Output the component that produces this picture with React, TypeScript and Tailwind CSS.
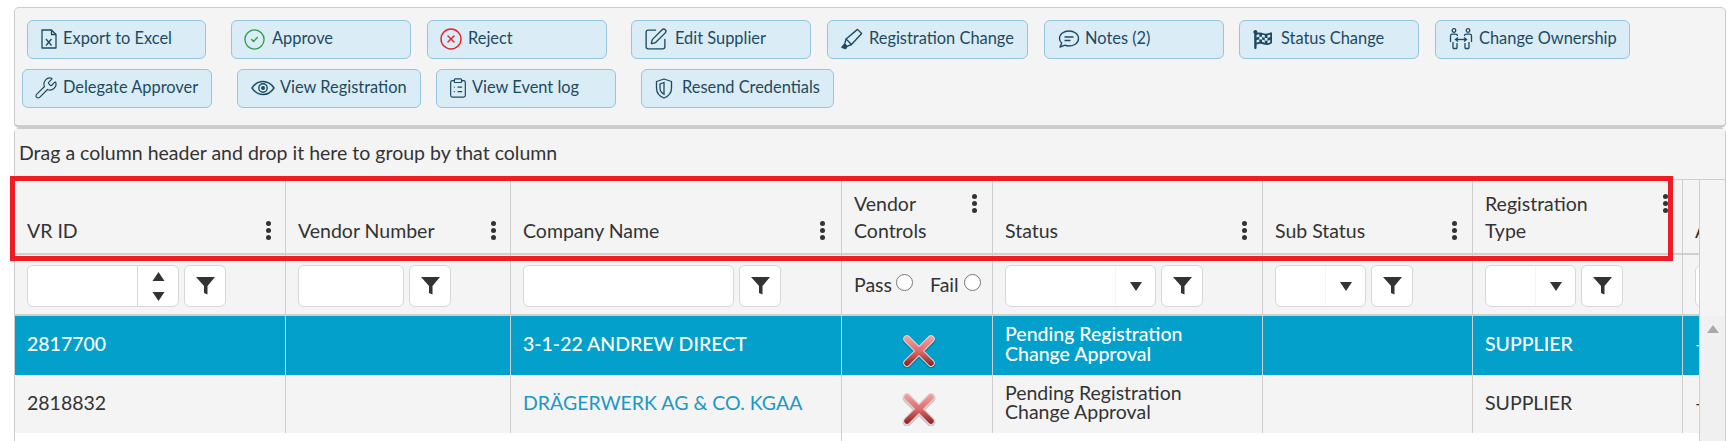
import type { ReactNode } from "react";
import { CircleCheck, CircleX, ClipboardList, SquarePen, Wrench } from "lucide-react";
import { FaFlagCheckered } from "react-icons/fa";

const INK = "#1d4a63";

function FileXIcon() {
  return (
    <svg width="16" height="20" viewBox="0 0 16 20" fill="none" stroke={INK} strokeWidth="1.3">
      <path d="M1 1h9.5L15 5.5V19H1z" strokeLinejoin="round" />
      <path d="M10.5 1v4.5H15" />
      <path d="M5 10l5.5 6.5M10.5 10L5 16.5" />
    </svg>
  );
}

function MarkerIcon() {
  return (
    <svg width="22" height="22" viewBox="0 0 24 24" fill="none" stroke={INK} strokeWidth="1.5" strokeLinejoin="round">
      <path d="M18 1.500l4.500 4.500L11.500 18l-6-6z" />
      <path d="M5.500 12L4 17.500l2.500 2.500 5-2" />
      <path d="M4 17.500L1 21l4 1.500 1.500-2.500" fill={INK} />
    </svg>
  );
}

function NotesIcon() {
  return (
    <svg width="22" height="20" viewBox="0 0 22 20" fill="none" stroke={INK} strokeWidth="1.4">
      <path d="M11 2c5 0 9.500 2.900 9.500 7.500S16 17 11 17c-1.500 0-3-.3-4-.8L2 18l1.700-4C2.300 12.900 1.500 11.300 1.500 9.500 1.500 4.900 6 2 11 2z" strokeLinejoin="round" />
      <path d="M6.500 8h9M6.500 11.500h6" />
    </svg>
  );
}

function OwnershipIcon() {
  return (
    <svg width="24" height="22" viewBox="0 0 24 22" fill="none" stroke={INK} strokeWidth="1.3">
      <circle cx="5" cy="2.500" r="1.800" />
      <circle cx="19" cy="2.500" r="1.800" />
      <path d="M1.500 14V8c0-1 .8-1.800 1.800-1.800h3.400c1 0 1.800.8 1.800 1.800M4 20.500V14M8 20.500H4M8 20.500V15" />
      <path d="M22.500 14V8c0-1-.8-1.800-1.800-1.800h-3.400c-1 0-1.800.8-1.800 1.800M20 20.500V14M16 20.500h4M16 20.500V15" />
      <path d="M7 11.500h10" />
      <path d="M9 9.500l-2.500 2 2.500 2M15 9.500l2.500 2-2.500 2" />
    </svg>
  );
}

function EyeIcon() {
  return (
    <svg width="24" height="16" viewBox="0 0 24 16" fill="none" stroke={INK} strokeWidth="1.4">
      <path d="M1 8c2.800-4.300 6.500-6.500 11-6.500S20.200 3.700 23 8c-2.800 4.300-6.500 6.500-11 6.500S3.800 12.300 1 8z" />
      <circle cx="12" cy="8" r="4.200" />
      <circle cx="12" cy="8" r="2" fill={INK} stroke="none" />
    </svg>
  );
}

function ShieldIcon() {
  return (
    <svg width="18" height="21" viewBox="0 0 18 21" fill="none" stroke={INK} strokeWidth="1.3">
      <path d="M9 1l7.500 2.500V10c0 5-3.500 8.500-7.500 10C5 18.500 1.500 15 1.500 10V3.500z" strokeLinejoin="round" />
      <path d="M9 4.500L5 6v4.500c0 2.500 1.800 4.500 4 5.700z" />
    </svg>
  );
}

const row1 = [
  { label: "Export to Excel", box: "ml-[12px] w-[179px]", icon: <FileXIcon />, slot: "w-[22px]" },
  { label: "Approve", box: "ml-[25px] w-[180px]", icon: <CircleCheck size={23} color="#2f9e44" strokeWidth={1.4} className="-ml-[2px]" />, slot: "w-[27px]" },
  { label: "Reject", box: "ml-[16px] w-[180px]", icon: <CircleX size={24} color="#e8202c" strokeWidth={1.4} className="-ml-[2px]" />, slot: "w-[27px]" },
  { label: "Edit Supplier", box: "ml-[24px] w-[180px]", icon: <SquarePen size={25} color={INK} strokeWidth={1.3} className="-ml-[2px]" />, slot: "w-[30px]" },
  { label: "Registration Change", box: "ml-[16px] w-[201px]", icon: <MarkerIcon />, slot: "w-[28px]" },
  { label: "Notes (2)", box: "ml-[16px] w-[180px]", icon: <NotesIcon />, slot: "w-[27px]" },
  { label: "Status Change", box: "ml-[15px] w-[180px]", icon: <FaFlagCheckered size={19} color={INK} />, slot: "w-[28px]" },
  { label: "Change Ownership", box: "ml-[16px] w-[195px]", icon: <OwnershipIcon />, slot: "w-[30px]" },
];

const row2 = [
  { label: "Delegate Approver", box: "ml-[7px] w-[190px]", icon: <Wrench size={24} color={INK} strokeWidth={1.2} className="-ml-[2px]" />, slot: "w-[27px]" },
  { label: "View Registration", box: "ml-[25px] w-[184px]", icon: <EyeIcon />, slot: "w-[29px]" },
  { label: "View Event log", box: "ml-[15px] w-[180px]", icon: <ClipboardList size={22} color={INK} strokeWidth={1.3} className="-ml-[3px]" />, slot: "w-[22px]" },
  { label: "Resend Credentials", box: "ml-[25px] w-[193px]", icon: <ShieldIcon />, slot: "w-[27px]" },
];

function ToolButton({ label, box, icon, slot }: { label: string; box: string; icon: ReactNode; slot: string }) {
  return (
    <button className={`${box} flex h-[39px] shrink-0 items-center rounded-[6px] border border-[#94c6de] bg-[#daecf5] pb-[1px] pl-[13px] text-[16.400px] text-[#1d4a63]`}>
      <span className={`${slot} flex shrink-0 items-center`}>{icon}</span>
      <span className="pb-[2px] whitespace-nowrap">{label}</span>
    </button>
  );
}

function Kebab() {
  return (
    <div className="flex h-[27px] w-[5px] shrink-0 flex-col items-center justify-center gap-[2.500px]">
      <span className="size-[4.500px] rounded-full bg-[#333]" />
      <span className="size-[4.500px] rounded-full bg-[#333]" />
      <span className="size-[4.500px] rounded-full bg-[#333]" />
    </div>
  );
}

function HeadCell({ width, lines }: { width: string; lines: string[] }) {
  return (
    <div className={`${width} flex shrink-0 flex-col justify-end border-r border-[#cfcfcf] pb-[9px] pl-[12px]`}>
      <div className="flex items-start justify-between">
        <div className="leading-[27px]">
          {lines.map((l) => (
            <div key={l}>{l}</div>
          ))}
        </div>
        <Kebab />
      </div>
    </div>
  );
}

function FilterButton() {
  return (
    <button className="flex h-[42px] w-[42px] shrink-0 items-center justify-center rounded-[6px] border border-[#d8d8d8] bg-white">
      <svg width="19" height="18" viewBox="0 0 19 18">
        <path d="M0 0h19l-7.500 9v8.500L8 16V9z" fill="#333" />
      </svg>
    </button>
  );
}

function SelectBox({ width }: { width: string }) {
  return (
    <div className={`${width} flex h-[42px] shrink-0 justify-end rounded-[6px] border border-[#d8d8d8] bg-white`}>
      <div className="flex w-[40px] items-center justify-center border-l border-[#f5f5f5] pt-[1px]">
        <svg width="12" height="9" viewBox="0 0 12 9">
          <path d="M0 0h12L6 9z" fill="#333" />
        </svg>
      </div>
    </div>
  );
}

function RedCross() {
  return (
    <svg width="34" height="34" viewBox="0 0 34 34" fill="none">
      <defs>
        <linearGradient id="crossFill" gradientUnits="userSpaceOnUse" x1="0" y1="3" x2="0" y2="32">
          <stop offset="0" stopColor="#f0a0a0" />
          <stop offset="0.5" stopColor="#dc6a6a" />
          <stop offset="1" stopColor="#8a1f1f" />
        </linearGradient>
      </defs>
      <path d="M5 5l24 24M29 5L5 29" stroke="#000" strokeOpacity="0.18" strokeWidth="9" strokeLinecap="round" transform="translate(0 1)" />
      <path d="M5 5l24 24M29 5L5 29" stroke="#e4d6d6" strokeWidth="7.500" strokeLinecap="round" />
      <path d="M5 5l24 24M29 5L5 29" stroke="url(#crossFill)" strokeWidth="5.500" strokeLinecap="round" />
    </svg>
  );
}

function DataRow({ height, selected, name }: { height: string; selected: boolean; name: { id: string; company: string } }) {
  const rowTone = selected ? "bg-[#02a0ca] text-white" : "bg-[#f4f4f4] text-[#333]";
  const weight = selected ? "font-medium" : "";
  const cell = "flex shrink-0 items-center border-r border-[#cfcfcf] pl-[12px] pb-[3px]";
  return (
    <div className={`${height} ${rowTone} flex`}>
      <div className={`${cell} ${weight} w-[271px]`}>{name.id}</div>
      <div className={`${cell} w-[225px]`} />
      <div className={`${cell} ${weight} w-[331px] ${selected ? "" : "text-[#1b98c4]"}`}>{name.company}</div>
      <div className="flex w-[151px] shrink-0 items-center justify-center border-r border-[#cfcfcf] pt-[10px] pl-[3px]">
        <RedCross />
      </div>
      <div className={`${cell} ${weight} w-[270px] pb-[4px]`}>
        <div className="leading-[19.500px]">
          Pending Registration
          <br />
          Change Approval
        </div>
      </div>
      <div className={`${cell} w-[210px]`} />
      <div className={`${cell} ${weight} w-[210px]`}>SUPPLIER</div>
      <div className="flex w-[16px] shrink-0 items-center overflow-hidden pb-[3px] pl-[12px]">—</div>
    </div>
  );
}

export default function App() {
  return (
    <div className="relative h-[441px] w-[1733px] overflow-hidden bg-white pt-[7px] pl-[14px] font-['Lato',sans-serif] text-[19.500px] text-[#333]">
      {/* toolbar */}
      <section className="h-[121px] w-[1712px] rounded-[5px] border border-b-[3px] border-[#cccccc] bg-[#f4f4f4] pt-[12px]">
        <div className="flex">
          {row1.map((b) => (
            <ToolButton key={b.label} {...b} />
          ))}
        </div>
        <div className="mt-[10px] flex">
          {row2.map((b) => (
            <ToolButton key={b.label} {...b} />
          ))}
        </div>
      </section>

      {/* grid */}
      <section className="w-[1712px] rounded-t-[5px] border-x border-t border-[#cccccc] bg-white">
        <div className="flex h-[50px] items-center bg-[#f4f4f4] pb-[3px] pl-[4px]">
          Drag a column header and drop it here to group by that column
        </div>
        <div className="flex border-t border-[#cfcfcf]">
          <div className="w-[1684px] shrink-0 overflow-hidden">
            <div className="flex h-[75px] border-b-2 border-[#cfcfcf] bg-[#f4f4f4]">
              <HeadCell width="w-[271px] pr-[14px]" lines={["VR ID"]} />
              <HeadCell width="w-[225px] pr-[14px]" lines={["Vendor Number"]} />
              <HeadCell width="w-[331px] pr-[16px]" lines={["Company Name"]} />
              <HeadCell width="w-[151px] pr-[15px]" lines={["Vendor", "Controls"]} />
              <HeadCell width="w-[270px] pr-[15px]" lines={["Status"]} />
              <HeadCell width="w-[210px] pr-[15px]" lines={["Sub Status"]} />
              <HeadCell width="w-[210px] pr-[14px]" lines={["Registration", "Type"]} />
              <div className="flex w-[16px] shrink-0 items-end overflow-hidden pb-[9px] pl-[12px] leading-[27px]">A</div>
            </div>

            <div className="flex h-[61px] border-b-2 border-[#cfcfcf] bg-[#f4f4f4]">
              <div className="flex w-[271px] shrink-0 gap-[5px] border-r border-[#cfcfcf] pt-[10px] pl-[12px]">
                <div className="flex h-[42px] w-[152px] justify-end rounded-[6px] border border-[#d8d8d8] bg-white">
                  <div className="flex w-[41px] flex-col items-center justify-center gap-[11px] border-l border-[#d8d8d8]">
                    <svg width="13" height="9" viewBox="0 0 12 9">
                      <path d="M6 0l6 9H0z" fill="#333" />
                    </svg>
                    <svg width="13" height="9" viewBox="0 0 12 9">
                      <path d="M0 0h12L6 9z" fill="#333" />
                    </svg>
                  </div>
                </div>
                <FilterButton />
              </div>
              <div className="flex w-[225px] shrink-0 gap-[5px] border-r border-[#cfcfcf] pt-[10px] pl-[12px]">
                <input className="h-[42px] w-[106px] rounded-[6px] border border-[#d8d8d8] bg-white" />
                <FilterButton />
              </div>
              <div className="flex w-[331px] shrink-0 gap-[5px] border-r border-[#cfcfcf] pt-[10px] pl-[12px]">
                <input className="h-[42px] w-[211px] rounded-[6px] border border-[#d8d8d8] bg-white" />
                <FilterButton />
              </div>
              <div className="w-[151px] shrink-0 border-r border-[#cfcfcf] pt-[9px] pl-[12px]">
                <div className="flex h-[42px] items-center">
                  <span>Pass</span>
                  <input type="radio" className="mb-[5px] ml-[4px] size-[17px] appearance-none rounded-full border border-[#777] bg-white" />
                  <span className="ml-[17px]">Fail</span>
                  <input type="radio" className="mb-[5px] ml-[5px] size-[17px] appearance-none rounded-full border border-[#777] bg-white" />
                </div>
              </div>
              <div className="flex w-[270px] shrink-0 gap-[5px] border-r border-[#cfcfcf] pt-[10px] pl-[12px]">
                <SelectBox width="w-[151px]" />
                <FilterButton />
              </div>
              <div className="flex w-[210px] shrink-0 gap-[5px] border-r border-[#cfcfcf] pt-[10px] pl-[12px]">
                <SelectBox width="w-[91px]" />
                <FilterButton />
              </div>
              <div className="flex w-[210px] shrink-0 gap-[5px] border-r border-[#cfcfcf] pt-[10px] pl-[12px]">
                <SelectBox width="w-[91px]" />
                <FilterButton />
              </div>
              <div className="w-[16px] shrink-0 overflow-hidden pt-[10px] pl-[12px]">
                <div className="h-[42px] w-[40px] rounded-[6px] border border-[#d8d8d8] bg-white" />
              </div>
            </div>

            <DataRow height="h-[59px]" selected name={{ id: "2817700", company: "3-1-22 ANDREW DIRECT" }} />
            <DataRow height="h-[58px]" selected={false} name={{ id: "2818832", company: "DRÄGERWERK AG & CO. KGAA" }} />
            <div className="h-[10px] w-[827px] border-r border-[#cfcfcf] bg-white" />
          </div>

          {/* scrollbar */}
          <div className="flex-1 border-l border-[#cfcfcf]">
            <div className="h-[136px] bg-[#f4f4f4]" />
            <div className="flex h-[130px] justify-center bg-[#f0f0f0] pt-[9px]">
              <svg width="12" height="8" viewBox="0 0 12 8">
                <path d="M6 0l6 8H0z" fill="#a9a9a9" />
              </svg>
            </div>
          </div>
        </div>
      </section>

      {/* red annotation round the header row */}
      <div className="absolute top-[176px] left-[10px] h-[85px] w-[1663px] border-[5px] border-[#ee1c25]" />
    </div>
  );
}
